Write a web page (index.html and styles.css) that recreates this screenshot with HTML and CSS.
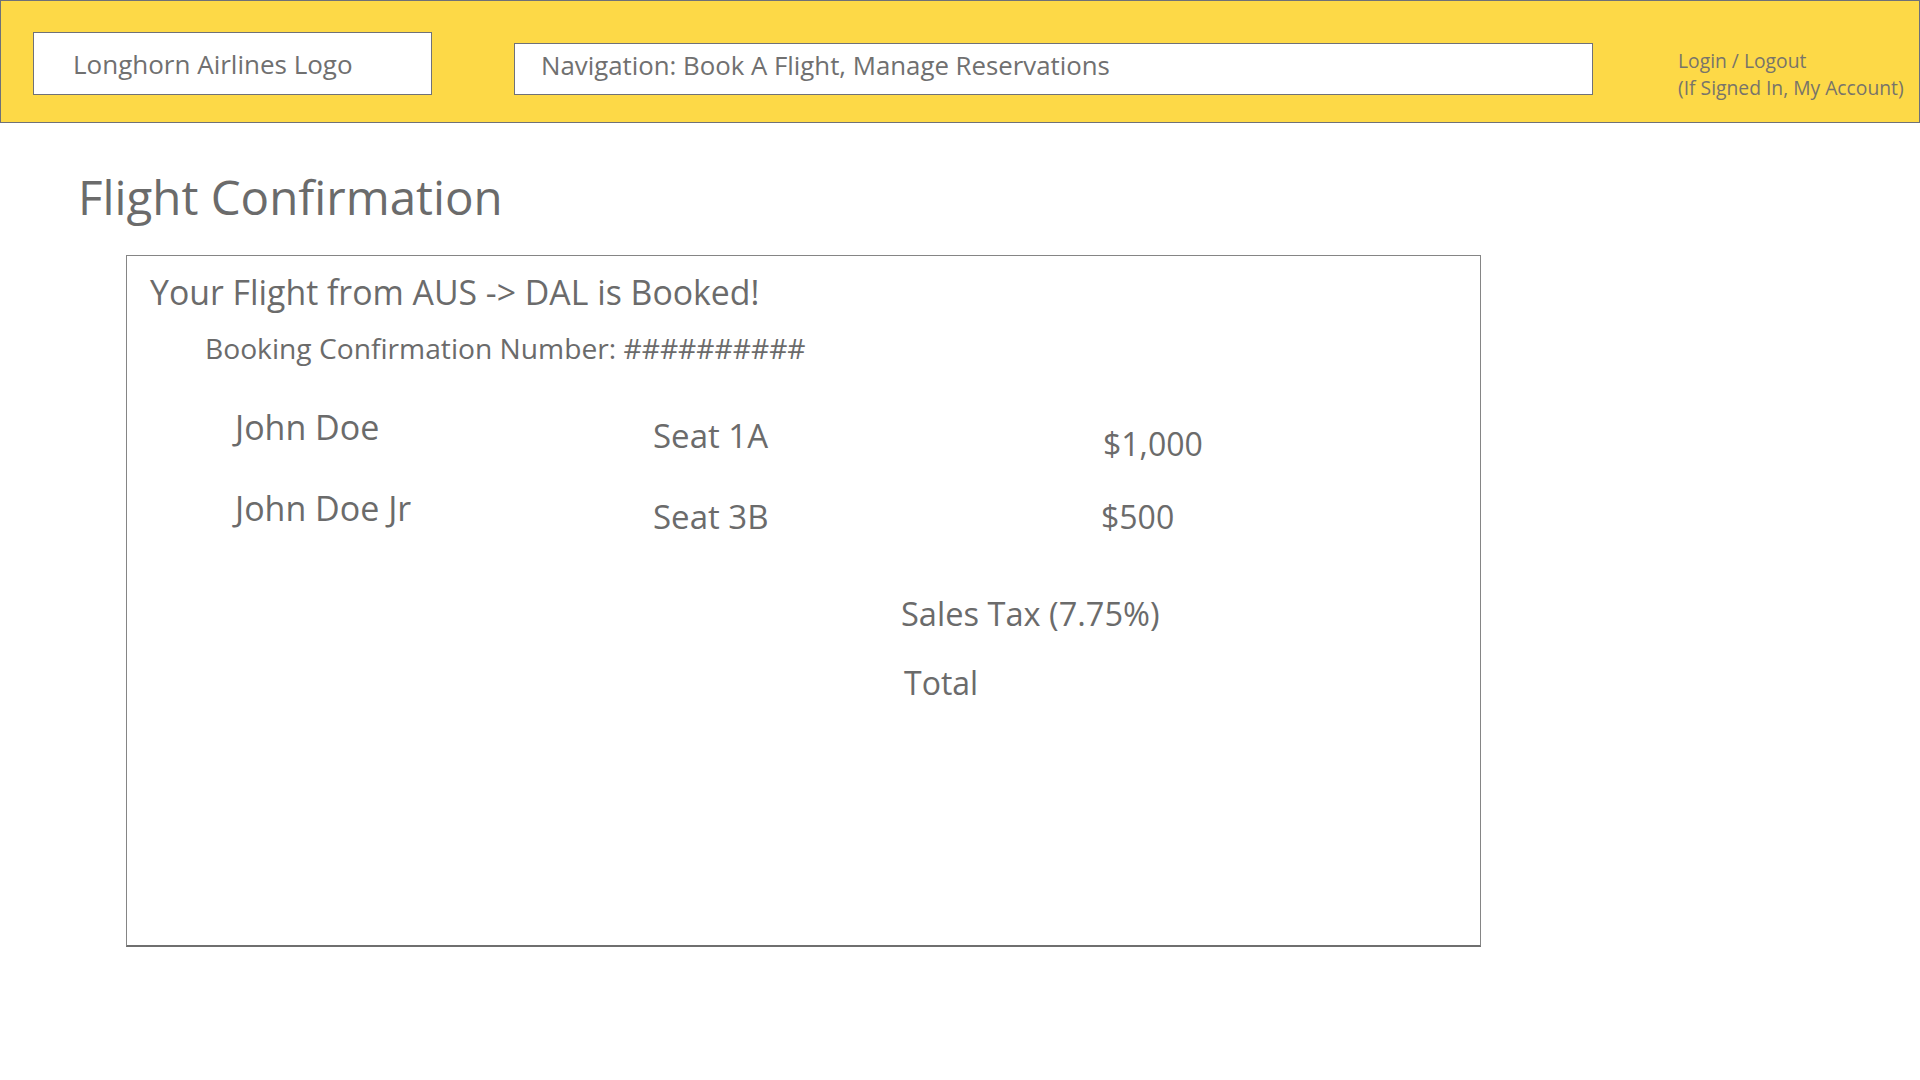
FILE: index.html
```html
<!DOCTYPE html>
<html lang="en">
<head>
<meta charset="utf-8">
<title>Flight Confirmation</title>
<link rel="stylesheet" href="styles.css">
</head>
<body>
<header class="topbar">
  <div class="logo-box">Longhorn Airlines Logo</div>
  <nav class="nav-box">Navigation: Book A Flight, Manage Reservations</nav>
  <div class="account">Login / Logout<br>(If Signed In, My Account)</div>
</header>
<main class="page">
  <h1 class="page-title">Flight Confirmation</h1>
  <section class="card">
    <h2 class="card-heading">Your Flight from AUS -&gt; DAL is Booked!</h2>
    <p class="booking-number">Booking Confirmation Number: ##########</p>
    <div class="passengers">
      <div class="passenger-row row-first">
        <div class="cell name">John Doe</div>
        <div class="cell seat">Seat 1A</div>
        <div class="cell price">$1,000</div>
      </div>
      <div class="passenger-row row-second">
        <div class="cell name">John Doe Jr</div>
        <div class="cell seat">Seat 3B</div>
        <div class="cell price">$500</div>
      </div>
    </div>
    <div class="summary">
      <div class="summary-line tax">Sales Tax (7.75%)</div>
      <div class="summary-line total">Total</div>
    </div>
  </section>
</main>
</body>
</html>
```
FILE: styles.css
```css
* { box-sizing: border-box; }

body {
  margin: 0;
  font-family: "Open Sans", "Noto Sans", sans-serif;
  font-weight: 400;
  color: #6b6b6b;
  background: #ffffff;
}

.topbar {
  display: flex;
  align-items: flex-start;
  height: 123px;
  background: #fdd947;
  border: 1px solid #6f7178;
  padding-left: 32px;
}

.logo-box {
  margin-top: 31px;
  width: 399px;
  height: 63px;
  background: #ffffff;
  border: 1px solid #6f7178;
  display: flex;
  align-items: center;
  padding: 1px 0 0 39px;
  font-size: 26px;
  color: #707070;
}

.nav-box {
  margin-left: 82px;
  margin-top: 42px;
  width: 1079px;
  height: 52px;
  background: #ffffff;
  border: 1px solid #6f7178;
  display: flex;
  align-items: center;
  padding: 0 0 8px 26px;
  font-size: 25.8px;
  color: #707070;
}

.account {
  margin-left: 85px;
  margin-top: 46px;
  font-size: 19.3px;
  line-height: 27px;
  color: #78746a;
}

.page-title {
  margin: 42px 0 0 78px;
  font-size: 47.5px;
  font-weight: 400;
  line-height: 64px;
}

.card {
  margin: 26px 0 0 126px;
  width: 1355px;
  height: 692px;
  border: 1px solid #858585;
  border-bottom: 2px solid #6f6f6f;
  padding: 14px 0 0 23px;
}

.card-heading {
  margin: 0;
  font-size: 33.8px;
  font-weight: 400;
  line-height: 45px;
}

.booking-number {
  margin: 14px 0 0 55px;
  font-size: 28.2px;
  font-weight: 400;
  line-height: 38px;
}

.passengers {
  margin: 38px 0 0 85px;
}

.passenger-row {
  display: grid;
  grid-template-columns: 418px 450px auto;
  align-items: start;
}

.row-second {
  margin-top: 20px;
}

.cell {
  line-height: 44px;
}

.name { font-size: 34px; }
.seat { font-size: 33px; padding-top: 9px; }
.price { font-size: 32px; }

.row-first .price { padding-top: 17px; }
.row-second .price { padding-top: 9px; margin-left: -2px; }

.summary {
  margin: 53px 0 0 751px;
}

.summary-line {
  font-size: 32px;
  line-height: 44px;
}

.tax { font-size: 32.6px; }

.total {
  margin-top: 25px;
  padding-left: 3px;
}
```
